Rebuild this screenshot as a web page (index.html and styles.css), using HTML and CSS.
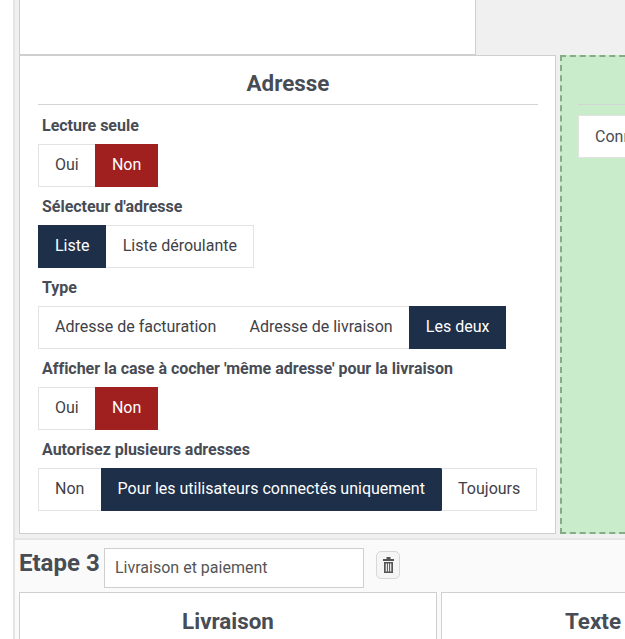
FILE: index.html
```html
<!DOCTYPE html>
<html lang="fr">
<head>
<meta charset="utf-8">
<title>Étapes</title>
<link rel="stylesheet" href="styles.css">
</head>
<body>
<div class="page">
  <section class="step step-top">
    <div class="card card-top"></div>
    <div class="row">
      <div class="card card-address">
        <h2 class="card-title">Adresse</h2>
        <div class="field">
          <div class="label">Lecture seule</div>
          <div class="seg"><span class="opt">Oui</span><span class="opt red">Non</span></div>
        </div>
        <div class="field">
          <div class="label">Sélecteur d'adresse</div>
          <div class="seg"><span class="opt navy">Liste</span><span class="opt">Liste déroulante</span></div>
        </div>
        <div class="field">
          <div class="label">Type</div>
          <div class="seg"><span class="opt">Adresse de facturation</span><span class="opt">Adresse de livraison</span><span class="opt navy">Les deux</span></div>
        </div>
        <div class="field">
          <div class="label">Afficher la case à cocher 'même adresse' pour la livraison</div>
          <div class="seg"><span class="opt">Oui</span><span class="opt red">Non</span></div>
        </div>
        <div class="field">
          <div class="label">Autorisez plusieurs adresses</div>
          <div class="seg"><span class="opt">Non</span><span class="opt navy">Pour les utilisateurs connectés uniquement</span><span class="opt">Toujours</span></div>
        </div>
      </div>
      <div class="dropzone">
        <div class="drop-rule"></div>
        <div class="drop-item">Connexion</div>
      </div>
    </div>
  </section>
  <section class="step step-next">
    <div class="step-head">
      <h3 class="step-title">Etape 3</h3>
      <div class="step-input">Livraison et paiement</div>
      <button class="trash" type="button" aria-label="Supprimer">
        <svg width="11" height="16" viewBox="0 0 11 16"><path fill="#555" fill-rule="evenodd" d="M3.500 0h4v2H11v2H0V2h3.500zM1 5h9v11H1zM2.700 6.500V14.500H3.900V6.500zM4.900 6.500V14.500H6.100V6.500zM7.100 6.500V14.500H8.300V6.500z"/></svg>
      </button>
    </div>
    <div class="row row-next">
      <div class="card card-ship"><h2 class="card-title">Livraison</h2></div>
      <div class="card card-text"><h2 class="card-title">Texte</h2></div>
    </div>
  </section>
</div>
</body>
</html>
```
FILE: styles.css
```css
* { box-sizing: border-box; }
html, body { margin: 0; padding: 0; height: 639px; overflow: hidden; background: #fff; }
body { font-family: Roboto, "Liberation Sans", sans-serif; color: #484c55; }
.page { width: 760px; margin-left: 13px; border-left: 2px solid #e4e4e4; }
.step-top { background: #f0f0f0; padding: 0 0 4px 4px; border-bottom: 2px solid #e6e6e6; height: 541px; }
.card { background: #fff; border: 1px solid #cfcfcf; }
.card-top { width: 457px; height: 56px; margin-top: -1px; }
.row { display: flex; gap: 4px; }
.card-address { flex: none; width: 537px; height: 479px; padding: 0 17px 0 18px; }
.card-title { margin: 0; font-size: 22.400px; font-weight: 700; line-height: 26px; text-align: center; color: #484c55; }
.card-address > .card-title { padding: 14px 0 8px; height: 49px; border-bottom: 1px solid #d4d4d4; margin-bottom: 11px; }
.label { padding-left: 4px; font-size: 16px; font-weight: 700; line-height: 19px; height: 28px; letter-spacing: -0.02px; }
.seg { display: inline-flex; height: 43px; vertical-align: top; background: #fff; margin-bottom: 10px; font-size: 16px; line-height: 39px; color: #3f4147; }
.opt { padding: 0 16px; white-space: nowrap; border: 1px solid #e3e3e3; }
.opt:not(:last-child) { border-right-color: transparent; }
.opt + .opt { margin-left: -0.8px; border-left-color: transparent; }
.opt.red { background: #a01f1f; border-color: #a01f1f; color: #fff; }
.opt.navy { background: #1e2f4a; border-color: #1e2f4a; color: #fff; }
.dropzone { flex: 1; height: 479px; background: #c9edcb; border: 2px dashed #85ab89; padding: 47px 0 0 16px; }
.drop-rule { height: 1px; background: #d4d4d4; margin-bottom: 10px; }
.drop-item { height: 43px; width: 120px; padding-left: 16px; line-height: 41px; background: #fff; border: 1px solid #e3e3e3; font-size: 16px; color: #484c55; }
.step-next { background: #fafafa; padding: 8px 0 0 4px; }
.step-head { display: flex; align-items: flex-start; height: 44px; }
.step-title { margin: 0; width: 85px; font-size: 24px; font-weight: 700; line-height: 30px; color: #484c55; }
.step-input { flex: none; width: 260px; height: 40px; padding-left: 10px; line-height: 38px; background: #fff; border: 1px solid #cfcfcf; font-size: 16px; color: #555; }
.trash { display: flex; align-items: center; justify-content: center; width: 24px; height: 28px; margin: 3px 0 0 12px; padding: 0; background: #f5f5f5; border: 1px solid #d8d8d8; border-radius: 5px; }
.card-ship { flex: none; width: 418px; height: 60px; padding-top: 15px; }
.card-text { flex: none; width: 304px; height: 60px; padding-top: 15px; }
```
